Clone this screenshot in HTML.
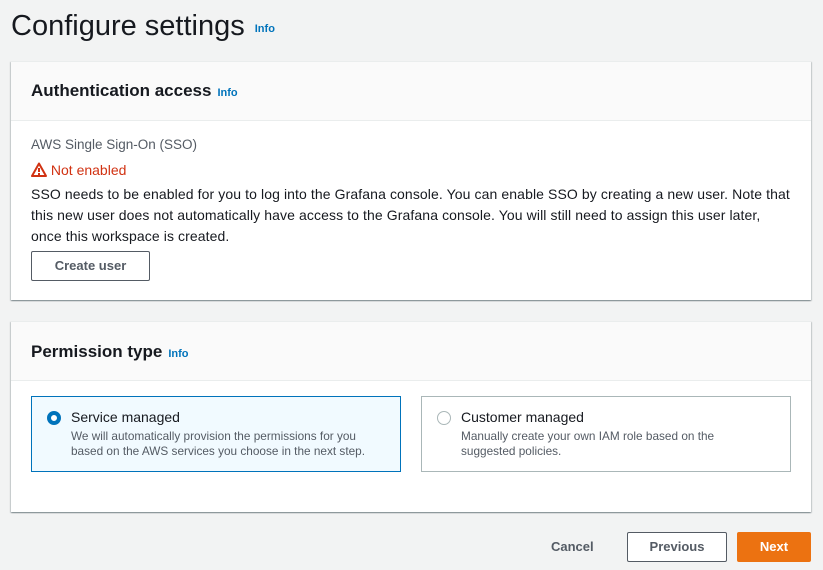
<!DOCTYPE html>
<html><head><style>
*{box-sizing:border-box;margin:0;padding:0}
body{width:823px;height:570px;background:#f2f3f3;font-family:"Liberation Sans",sans-serif;color:#16191f;position:relative;overflow:hidden;font-size:14px}
.abs{position:absolute}
.info{color:#0073bb;font-weight:bold;font-size:11px;margin-left:6px}
.panel{position:absolute;left:11px;width:800px;background:#fff;box-shadow:0 1px 1px 0 rgba(0,28,36,.3),1px 1px 1px 0 rgba(0,28,36,.15),-1px 1px 1px 0 rgba(0,28,36,.15);border-top:1px solid #eaeded}
.ph{background:#fafafa;border-bottom:1px solid #eaeded;position:absolute;left:0;right:0;top:0}
.ph h2{position:absolute;left:20px;font-size:17px;font-weight:bold}
.btn{position:absolute;border:1px solid #545b64;background:#fff;color:#545b64;font-weight:bold;font-size:13px;text-align:center;border-radius:2px}
.card{position:absolute;top:74px;width:370px;height:76px;border:1px solid #aab7b8}
.card .t{position:absolute;left:39px;top:12px;font-size:14px}
.card .d{position:absolute;left:39px;top:32px;font-size:11.8px;color:#545b64;line-height:15px;white-space:nowrap}
.radio{position:absolute;left:15px;top:14px;width:14px;height:14px;border-radius:50%;border:1px solid #aab7b8}
</style></head><body>
<div class="abs" style="left:11px;top:10px;font-size:29px;">Configure settings<span class="info" style="vertical-align:3px;margin-left:10px">Info</span></div>
<div class="panel" style="top:61px;height:239px">
 <div class="ph" style="height:59px"><h2 style="top:19px">Authentication access<span class="info">Info</span></h2></div>
 <div class="abs" style="left:20px;top:75px;color:#545b64;font-size:13.5px">AWS Single Sign-On (SSO)</div>
 <div class="abs" style="left:20px;top:100px;color:#d13212">
  <svg width="16" height="15" viewBox="0 0 16 15" style="vertical-align:-2px"><path d="M8 1.5L1 14h14z" fill="none" stroke="#d13212" stroke-width="2" stroke-linejoin="round"/><rect x="7" y="6" width="2" height="4" fill="#d13212"/><rect x="7" y="11" width="2" height="2" fill="#d13212"/></svg> Not enabled</div>
 <div class="abs" style="left:20px;top:122px;width:780px;line-height:21px;font-size:14px;white-space:nowrap;letter-spacing:0.1px">SSO needs to be enabled for you to log into the Grafana console. You can enable SSO by creating a new user. Note that<br>this new user does not automatically have access to the Grafana console. You will still need to assign this user later,<br>once this workspace is created.</div>
 <div class="btn" style="left:20px;top:189px;width:119px;height:30px;line-height:28px">Create user</div>
</div>
<div class="panel" style="top:321px;height:191px">
 <div class="ph" style="height:59px"><h2 style="top:20px">Permission type<span class="info">Info</span></h2></div>
 <div class="card" style="left:20px;background:#f1faff;border-color:#0073bb">
  <div class="radio" style="border:4px solid #0073bb;background:#fff"></div>
  <div class="t">Service managed</div>
  <div class="d">We will automatically provision the permissions for you<br>based on the AWS services you choose in the next step.</div>
 </div>
 <div class="card" style="left:410px">
  <div class="radio"></div>
  <div class="t">Customer managed</div>
  <div class="d">Manually create your own IAM role based on the<br>suggested policies.</div>
 </div>
</div>
<div class="abs" style="left:551px;top:539px;font-weight:bold;font-size:13px;color:#545b64">Cancel</div>
<div class="btn" style="left:627px;top:532px;width:100px;height:30px;line-height:28px">Previous</div>
<div class="btn" style="left:737px;top:532px;width:74px;height:30px;line-height:28px;background:#ec7211;border-color:#ec7211;color:#fff">Next</div>
</body></html>
